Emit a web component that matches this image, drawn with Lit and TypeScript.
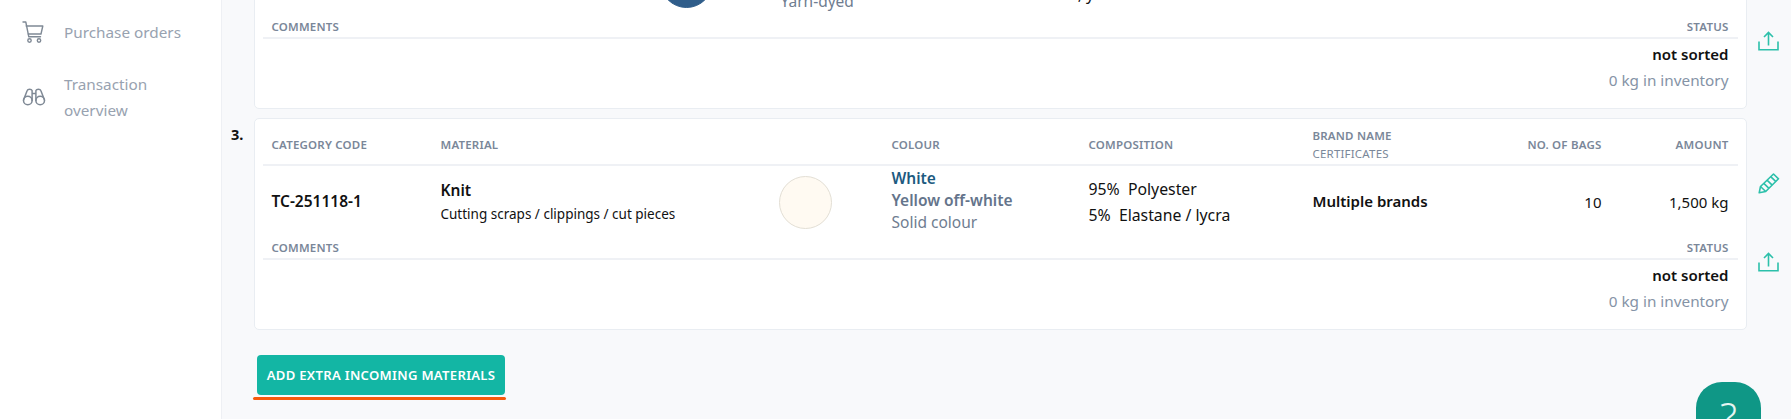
import { LitElement, html, css } from 'lit';
import { customElement, property } from 'lit/decorators.js';

interface Material {
  columns: string;
  code: string;
  name: string;
  detail: string;
  swatch: string;
  swatchBorder: string;
  colours: [string, string, string];
  composition: string[];
  brand: string;
  bags: string;
  amount: string;
}

const materials: Material[] = [
  {
    columns: '169px 219px 121px 247px 200px 1fr 100px 127px',
    code: 'TC-251118-0',
    name: 'Woven',
    detail: 'Mill ends, trims',
    swatch: '#2f5d8a',
    swatchBorder: '#2f5d8a',
    colours: ['Blue', 'Dark blue', 'Yarn-dyed'],
    composition: ['60%  Cotton', 'Cotton, yarn'],
    brand: 'Multiple brands',
    bags: '10',
    amount: '1,500 kg',
  },
  {
    columns: '169px 338px 113px 197px 224px 1fr 100px 127px',
    code: 'TC-251118-1',
    name: 'Knit',
    detail: 'Cutting scraps / clippings / cut pieces',
    swatch: '#fffaf2',
    swatchBorder: '#e3dfd5',
    colours: ['White', 'Yellow off-white', 'Solid colour'],
    composition: ['95%  Polyester', '5%  Elastane / lycra'],
    brand: 'Multiple brands',
    bags: '10',
    amount: '1,500 kg',
  },
];

const cartIcon = html`<svg width="22" height="22" viewBox="0 0 22 22" fill="none" stroke="currentColor" stroke-width="1.4" stroke-linecap="round" stroke-linejoin="round">
  <path d="M1 1h2.800l3 14.800h11.700" /><path d="M4.200 5h16.600l-1.800 8H6.300" />
  <circle cx="7.500" cy="19.500" r="1.700" /><circle cx="17" cy="19.500" r="1.700" /></svg>`;
const binocularsIcon = html`<svg width="24" height="18" viewBox="0 0 24 18" fill="none" stroke="currentColor" stroke-width="1.500" stroke-linecap="round" stroke-linejoin="round">
  <circle cx="5.800" cy="12.500" r="4.300" /><circle cx="18.200" cy="12.500" r="4.300" />
  <path d="M1.500 12 5.200 2.500C5.800 .8 9.400 .8 10.100 2.500V12.500M22.500 12 18.800 2.500C18.200 .8 14.600 .8 13.900 2.500V12.500M10.100 5.500h3.800" /></svg>`;
const uploadIcon = html`<svg width="21" height="20" viewBox="0 0 21 20" fill="none" stroke="currentColor" stroke-width="1.600">
  <path d="M1 10.500V18.800h19v-8.300M10.500 14.500V1.500M6 6l4.500-4.500L15 6" /></svg>`;
const pencilIcon = html`<svg width="22" height="21" viewBox="0 0 22 21" fill="none" stroke="currentColor" stroke-width="1.600" stroke-linejoin="round">
  <path d="M1.200 19.800l1.300-6.300L15.500 1l5 4.800L7.700 18.500z" /><path d="M2.500 13.500l5.200 5M5.800 10.300l5.200 5M9 7.200l5.200 5M12.700 3.700l5.200 5" /></svg>`;

@customElement('material-card')
export class MaterialCard extends LitElement {
  @property({ attribute: false }) item!: Material;
  @property({ type: Number }) index = 1;

  static styles = css`
    :host {
      display: flex;
      width: 1559px;
    }
    .index {
      width: 22.5px;
      flex: none;
      padding-top: 6px;
      font-size: 14.5px;
      font-weight: 700;
      line-height: 20px;
      color: #111;
    }
    .card {
      width: 1493px;
      height: 212px;
      flex: none;
      box-sizing: border-box;
      background: #fff;
      border: 1px solid #e9edf2;
      border-radius: 5px;
      padding: 0 8px;
    }
    .head,
    .data {
      display: grid;
      padding: 0 9px;
      align-items: center;
    }
    .head {
      box-sizing: border-box;
      height: 47px;
      padding-top: 6px;
      border-bottom: 2px solid #eff1f5;
    }
    .label {
      font-size: 11.5px;
      font-weight: 600;
      letter-spacing: 0.2px;
      line-height: 18px;
      color: #7a8799;
    }
    .label.light {
      font-weight: 400;
    }
    .right {
      text-align: right;
    }
    .data {
      height: 72px;
      font-size: 15px;
      color: #111;
    }
    .strong {
      font-weight: 600;
      padding-bottom: 2px;
    }
    .code {
      font-size: 15.500px;
      font-weight: 600;
      padding-bottom: 2px;
    }
    .name {
      font-size: 15.500px;
      font-weight: 600;
      line-height: 24px;
    }
    .detail {
      font-size: 13.500px;
      line-height: 24px;
    }
    .swatch {
      width: 53px;
      height: 53px;
      box-sizing: border-box;
      border-radius: 50%;
      border: 1.500px solid;
    }
    .colours {
      font-size: 15.500px;
      line-height: 22px;
      color: #6f7d90;
      padding-bottom: 4px;
    }
    .colours .first {
      font-weight: 600;
      color: #1d5a80;
    }
    .colours .second {
      font-weight: 600;
      color: #64748b;
    }
    .composition {
      font-size: 15.800px;
      line-height: 26px;
      white-space: pre;
    }
    .foot {
      display: flex;
      justify-content: space-between;
      align-items: center;
      height: 20px;
      padding: 0 9px;
      border-bottom: 2px solid #eff1f5;
    }
    .status {
      padding: 2px 9px 0 0;
      text-align: right;
      line-height: 26px;
    }
    .status b {
      display: block;
      font-size: 15px;
      font-weight: 600;
      color: #111;
    }
    .status span {
      font-size: 15.300px;
      color: #8593a6;
    }
    .actions {
      width: 43.500px;
      padding: 55px 0 0 11px;
      box-sizing: border-box;
      display: flex;
      flex-direction: column;
      align-items: flex-start;
      gap: 58px;
      color: #2cc0aa;
    }
    .actions svg {
      display: block;
    }
  `;

  render() {
    const { item } = this;
    return html`
      <div class="index">${this.index}.</div>
      <div class="card">
        <div class="head" style="grid-template-columns:${item.columns}">
          <div class="label">CATEGORY CODE</div>
          <div class="label">MATERIAL</div>
          <div></div>
          <div class="label">COLOUR</div>
          <div class="label">COMPOSITION</div>
          <div>
            <div class="label">BRAND NAME</div>
            <div class="label light">CERTIFICATES</div>
          </div>
          <div class="label right">NO. OF BAGS</div>
          <div class="label right">AMOUNT</div>
        </div>
        <div class="data" style="grid-template-columns:${item.columns}">
          <div class="code">${item.code}</div>
          <div>
            <div class="name">${item.name}</div>
            <div class="detail">${item.detail}</div>
          </div>
          <div class="swatch" style="background:${item.swatch};border-color:${item.swatchBorder}"></div>
          <div class="colours">
            <div class="first">${item.colours[0]}</div>
            <div class="second">${item.colours[1]}</div>
            <div>${item.colours[2]}</div>
          </div>
          <div class="composition">${item.composition.map((line) => html`<div>${line}</div>`)}</div>
          <div class="strong">${item.brand}</div>
          <div class="right">${item.bags}</div>
          <div class="right">${item.amount}</div>
        </div>
        <div class="foot">
          <div class="label">COMMENTS</div>
          <div class="label">STATUS</div>
        </div>
        <div class="status">
          <b>not sorted</b>
          <span>0 kg in inventory</span>
        </div>
      </div>
      <div class="actions">${pencilIcon}${uploadIcon}</div>
    `;
  }
}

@customElement('app-root')
export class AppRoot extends LitElement {
  static styles = css`
    :host {
      display: block;
      width: 1791px;
      height: 419px;
      overflow: hidden;
      position: relative;
      background: #f8f9fb;
      font-family: 'Noto Sans', 'Open Sans', sans-serif;
      color: #111;
    }
    .page {
      display: flex;
      height: 419px;
    }
    .side {
      width: 222px;
      flex: none;
      box-sizing: border-box;
      background: #fff;
      border-right: 1px solid #eef0f4;
      padding: 19px 0 0 22px;
      display: flex;
      flex-direction: column;
      gap: 26px;
      color: #98a2b0;
      font-size: 15.300px;
      line-height: 26px;
    }
    .nav {
      display: flex;
      align-items: center;
    }
    .nav .icon {
      width: 42px;
      flex: none;
      display: flex;
      color: #7f8995;
    }
    .main {
      flex: 1;
      padding-left: 9px;
      display: flex;
      flex-direction: column;
      gap: 9px;
      margin-top: -103px;
    }
    .add {
      align-self: flex-start;
      margin: 16px 0 0 22px;
    }
    button {
      display: block;
      width: 248px;
      height: 40px;
      margin-left: 4px;
      padding: 0;
      border: none;
      border-radius: 4px;
      background: #13b6a4;
      color: #fff;
      font: 600 13.100px 'Noto Sans', sans-serif;
      letter-spacing: 0.3px;
    }
    .mark {
      width: 253px;
      height: 3px;
      margin-top: 2px;
      border-radius: 2px;
      background: #f65a0c;
    }
    .help {
      position: absolute;
      left: 1696px;
      top: 382px;
      width: 65px;
      height: 65px;
      border-radius: 26px;
      background: #0f9786;
      color: #e6f5f2;
      font-size: 40px;
      font-weight: 300;
      line-height: 69px;
      text-align: center;
    }
  `;

  render() {
    return html`
      <div class="page">
        <aside class="side">
          <div class="nav"><span class="icon">${cartIcon}</span><span>Purchase orders</span></div>
          <div class="nav"><span class="icon">${binocularsIcon}</span><span>Transaction<br />overview</span></div>
        </aside>
        <main class="main">
          ${materials.map((item, i) => html`<material-card .item=${item} .index=${i + 2}></material-card>`)}
          <div class="add">
            <button>ADD EXTRA INCOMING MATERIALS</button>
            <div class="mark"></div>
          </div>
        </main>
      </div>
      <div class="help">?</div>
    `;
  }
}
